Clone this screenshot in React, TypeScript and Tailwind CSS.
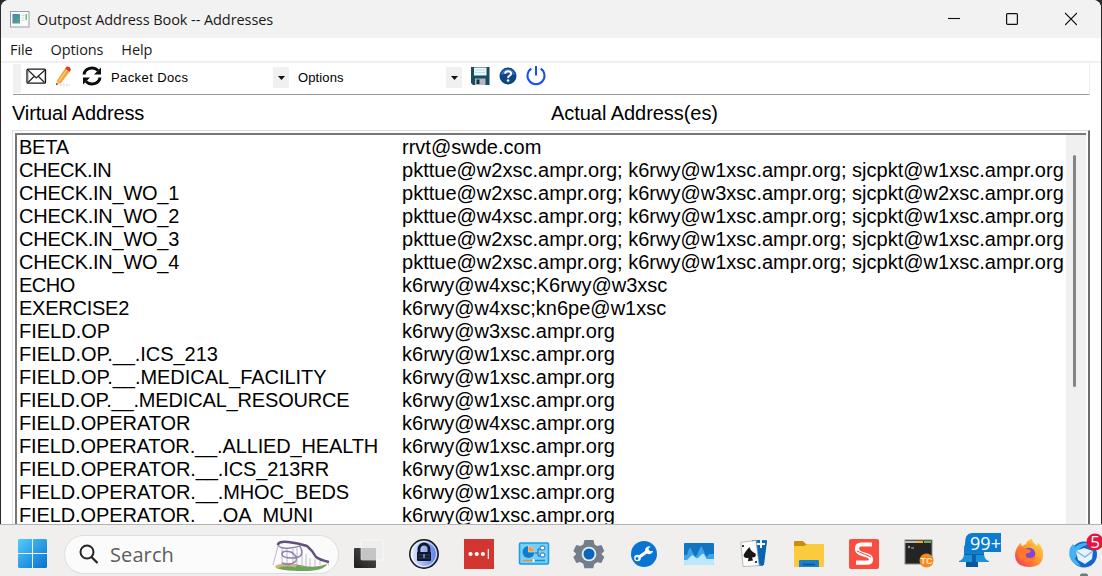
import type { ReactNode } from "react";

const rows: [string, string, string][] = [
  ["BETA", "rrvt@swde.com", "tracking-[-0.25px]"],
  ["CHECK.IN", "pkttue@w2xsc.ampr.org; k6rwy@w1xsc.ampr.org; sjcpkt@w1xsc.ampr.org", "tracking-[-0.4px]"],
  ["CHECK.IN_WO_1", "pkttue@w2xsc.ampr.org; k6rwy@w3xsc.ampr.org; sjcpkt@w2xsc.ampr.org", "tracking-[-0.25px]"],
  ["CHECK.IN_WO_2", "pkttue@w4xsc.ampr.org; k6rwy@w1xsc.ampr.org; sjcpkt@w1xsc.ampr.org", "tracking-[-0.25px]"],
  ["CHECK.IN_WO_3", "pkttue@w2xsc.ampr.org; k6rwy@w1xsc.ampr.org; sjcpkt@w1xsc.ampr.org", "tracking-[-0.25px]"],
  ["CHECK.IN_WO_4", "pkttue@w2xsc.ampr.org; k6rwy@w1xsc.ampr.org; sjcpkt@w1xsc.ampr.org", "tracking-[-0.25px]"],
  ["ECHO", "k6rwy@w4xsc;K6rwy@w3xsc", "tracking-[-0.5px]"],
  ["EXERCISE2", "k6rwy@w4xsc;kn6pe@w1xsc", "tracking-[-0.25px]"],
  ["FIELD.OP", "k6rwy@w3xsc.ampr.org", "tracking-[0px]"],
  ["FIELD.OP.__.ICS_213", "k6rwy@w1xsc.ampr.org", "tracking-[-0.05px]"],
  ["FIELD.OP.__.MEDICAL_FACILITY", "k6rwy@w1xsc.ampr.org", "tracking-[-0.04px]"],
  ["FIELD.OP.__.MEDICAL_RESOURCE", "k6rwy@w1xsc.ampr.org", "tracking-[-0.17px]"],
  ["FIELD.OPERATOR", "k6rwy@w4xsc.ampr.org", "tracking-[-0.1px]"],
  ["FIELD.OPERATOR.__.ALLIED_HEALTH", "k6rwy@w1xsc.ampr.org", "tracking-[-0.14px]"],
  ["FIELD.OPERATOR.__.ICS_213RR", "k6rwy@w1xsc.ampr.org", "tracking-[-0.1px]"],
  ["FIELD.OPERATOR.__.MHOC_BEDS", "k6rwy@w1xsc.ampr.org", "tracking-[-0.1px]"],
  ["FIELD.OPERATOR.__.OA_MUNI", "k6rwy@w1xsc.ampr.org", "tracking-[-0.12px]"],
];

function TitleBar() {
  return (
    <header className="flex h-[38px] shrink-0 items-center bg-[#f3f2f2] pl-[9px]">
      <svg width="20" height="17" viewBox="0 0 20 17" className="shrink-0">
        <defs>
          <linearGradient id="appIcon" x1="0" y1="0" x2="1" y2="1">
            <stop offset="0" stopColor="#4c7fc0" />
            <stop offset="1" stopColor="#4fae74" />
          </linearGradient>
        </defs>
        <rect x=".5" y=".5" width="18.5" height="15.5" fill="#fafafa" stroke="#9a9fa5" />
        <rect x="2.500" y="3" width="7.500" height="9.500" fill="url(#appIcon)" />
        <path d="M11.5 4.5h3M11.5 7h3M11.5 9.5h3" stroke="#d3d8dc" />
        <rect x="15.500" y="3" width="1.5" height="6" fill="#6fbe8c" />
      </svg>
      <h1 className="ml-[7px] mt-[2px] whitespace-nowrap text-[14.5px] tracking-[-0.07px] text-[#191919]">Outpost Address Book -- Addresses</h1>
      <div className="ml-auto flex items-center pr-[24px]">
        <svg width="12" height="14" viewBox="0 0 12 14"><path d="M0 6.5h12" stroke="#111" strokeWidth="1.1" /></svg>
        <svg width="12" height="14" viewBox="0 0 12 14" className="ml-[46px]">
          <rect x=".6" y="1.6" width="10.8" height="10.8" rx="1" fill="none" stroke="#111" strokeWidth="1.2" />
        </svg>
        <svg width="12" height="14" viewBox="0 0 12 14" className="ml-[47px]">
          <path d="M0 1l12 12M12 1L0 13" stroke="#111" strokeWidth="1.2" />
        </svg>
      </div>
    </header>
  );
}

function DropButton() {
  return (
    <span className="flex h-[21px] w-4 items-center justify-center bg-[#f0f0f0]">
      <svg width="7" height="4" viewBox="0 0 7 4"><path d="M0 0h7L3.5 4z" fill="#111" /></svg>
    </span>
  );
}

function Toolbar() {
  return (
    <div className="ml-3 mr-[11px] flex h-[32px] shrink-0 border-b border-r border-b-[#969696] border-r-[#eeeeee]">
      <div className="mt-px h-[29px] w-2 shrink-0 bg-[#f0f0f0]" />
      <div className="flex h-[26px] items-center">
        <svg width="21" height="17" viewBox="0 0 21 17" className="ml-[5px]">
          <rect x="1" y="1.2" width="18.5" height="14" rx="1" fill="#fff" stroke="#181818" strokeWidth="1.3" />
          <path d="M2 2l8.2 8L19 2M2 14.5l6-6M18.5 14.5l-6-6" fill="none" stroke="#222" strokeWidth="1.2" />
          <path d="M2.5 3v10M18.5 3v10" stroke="#999" strokeWidth=".5" />
        </svg>
        <svg width="18" height="20" viewBox="0 0 18 20" className="ml-[8px]">
          <path d="M2 14.5L10 2.500l4.500 3.500L6 17l-4 2z" fill="#f6a43a" />
          <path d="M4 15l8.500-12" stroke="#ffd08a" strokeWidth="1.2" />
          <path d="M10 2.500L11.500 .8q3.500-.9 4.500 2.700L14.500 6z" fill="#e33a22" />
          <path d="M2 14.500L1 19l4.500-2z" fill="#e9c392" />
          <path d="M1 19l.5-2 1.400 1.200z" fill="#222" />
          <path d="M5 19h10" stroke="#c9cfdf" strokeDasharray="2 1" />
        </svg>
        <svg width="20" height="20" viewBox="0 0 20 20" className="ml-[9px]">
          <path d="M2 8.500A8 7.200 0 0 1 16 4.500M18 11.500A8 7.200 0 0 1 4 15.500" fill="none" stroke="#0c0c0c" strokeWidth="3" />
          <path d="M19 1.500v7h-7zM1 18.500v-7h7z" fill="#0c0c0c" />
        </svg>
        <span className="ml-[9px] mt-[3px] w-[162px] whitespace-nowrap font-['Liberation_Sans'] text-[13px] tracking-[0.4px]">Packet Docs</span>
        <span className="mt-[3px]"><DropButton /></span>
        <span className="ml-[9px] mt-[3px] w-[148px] font-['Liberation_Sans'] text-[13px] tracking-[0.12px]">Options</span>
        <span className="mt-[3px]"><DropButton /></span>
        <svg width="19" height="20" viewBox="0 0 19 20" className="ml-[9px]">
          <path d="M0 1h18.500v18H2l-2-2z" fill="#174b66" />
          <rect x="3" y="1.500" width="12.500" height="8" fill="#eaf7fc" />
          <path d="M4 4h10M4 6.500h10" stroke="#bfdce8" />
          <rect x="4" y="12.500" width="10.500" height="6.500" fill="#b5b9bd" />
          <rect x="5.500" y="13.500" width="3" height="4.500" fill="#123449" />
        </svg>
        <svg width="18" height="18" viewBox="0 0 18 18" className="ml-[9px]">
          <circle cx="9" cy="9" r="8.500" fill="#0e4587" />
          <path d="M2 8a7 6 0 0 1 14 0q-7-3-14 0z" fill="#3773b2" />
          <path d="M6 6.700q.3-2.500 3.100-2.500t3 2.200q0 1.500-1.500 2.200Q9.100 9.200 9.100 11" fill="none" stroke="#fff" strokeWidth="2" />
          <circle cx="9.100" cy="13.500" r="1.300" fill="#fff" />
        </svg>
        <svg width="20" height="20" viewBox="0 0 20 20" className="ml-[9px]">
          <path d="M5.300 2.600a8.500 8.500 0 1 0 9.400 0M10 0v9.500" fill="none" stroke="#1750f0" strokeWidth="2" />
        </svg>
      </div>
    </div>
  );
}

function AddressList() {
  return (
    <section className="ml-[11px] mr-[11px] flex min-h-0 flex-1 overflow-hidden border-l border-r-2 border-t border-l-[#dddddd] border-r-[#6b6b6b] border-t-[#dddddd] pl-[2px] pr-[2px] pt-[2px]">
      <div className="flex min-w-0 flex-1 border-l-2 border-t-2 border-[#777777]">
        <div className="min-w-0 flex-1 pl-[2px] pt-px font-['Liberation_Sans'] text-[20px] leading-[23px] text-black">
          {rows.map(([name, address, tracking], i) => (
            <div key={i} className="flex h-[23px] whitespace-nowrap">
              <span className={`w-[383px] shrink-0 ${tracking}`}>{name}</span>
              <span className="tracking-[0.01px]">{address}</span>
            </div>
          ))}
        </div>
        <div className="flex w-[20px] shrink-0 bg-[#f0f0f0] pl-[7px] pt-[20px]">
          <div className="h-[232px] w-[3px] rounded-full bg-[#858585]" />
        </div>
      </div>
    </section>
  );
}

function Icon({ children }: { children?: ReactNode }) {
  return (
    <div className="flex w-[55px] shrink-0 justify-center">
      <svg width="32" height="32" viewBox="0 0 32 32" className="overflow-visible">{children}</svg>
    </div>
  );
}

function Coaster() {
  return (
    <svg width="60" height="32" viewBox="0 0 60 32">
      <path d="M3 27Q14 21 28 25T55 24Q52 31 32 31 8 31 3 27z" fill="#6da35a" />
      <path d="M4 27q10-4 20-1" stroke="#d2b66c" strokeWidth="3" fill="none" />
      <path d="M6 6L1 25M10 7v19M15 8v18M21 9v18M25 8v18M30 9v18M34 14v13M38 18v9M43 19v8M48 19v6M53 20l4 5" stroke="#c4b4ce" strokeWidth="1" />
      <path d="M6 5Q6 1 16 2t19 4q5 4 9 11 4 3 13 5" fill="none" stroke="#625077" strokeWidth="2.500" />
      <path d="M6 5q2 4 12 3t10-3M28 6q6 12-8 12-10 0-10-4t9-2q7 4 5 9-5 5-14 2" fill="none" stroke="#8d83ad" strokeWidth="1.500" />
    </svg>
  );
}

function Taskbar() {
  return (
    <footer className="flex h-[52px] shrink-0 items-center border-t border-[#b4b4b4] bg-[#f0efee] pt-[7px]">
      <svg width="30" height="30" viewBox="0 0 30 30" className="ml-[18px] shrink-0">
        <defs>
          <linearGradient id="win" x1="0" y1="0" x2="1" y2="1">
            <stop offset="0" stopColor="#50cdfb" /><stop offset="1" stopColor="#0870cf" />
          </linearGradient>
        </defs>
        <path d="M1 0h13v14H0V1zM15 0h13l1 1v13H15zM0 15h14v14H1l-1-1zM15 15h14v13l-1 1H15z" fill="url(#win)" />
      </svg>
      <div className="ml-4 flex h-[39px] w-[275px] shrink-0 items-center rounded-full border border-[#dddddd] bg-[#fbfbfb] pl-[14px] pr-[6px]">
        <svg width="20" height="20" viewBox="0 0 20 20">
          <circle cx="8" cy="8" r="6.500" fill="none" stroke="#252525" strokeWidth="2" />
          <path d="M12.500 13l6 6" stroke="#252525" strokeWidth="2.300" />
        </svg>
        <span className="ml-[11px] mt-[1px] text-[20px] tracking-[0.1px] text-[#5d5d5d]">Search</span>
        <span className="ml-auto mt-[3px]"><Coaster /></span>
      </div>
      <div className="ml-[2px] flex w-[761px] overflow-visible">
        <Icon>
          <defs><linearGradient id="dark" x1="0" x2="1" y1="1" y2="0"><stop stopColor="#1d1d1d" /><stop offset="1" stopColor="#555" /></linearGradient></defs>
          <rect x="1" y="10" width="22" height="20" rx="1" fill="url(#dark)" />
          <rect x="8" y="2" width="22" height="20" rx="1" fill="#eee" fillOpacity=".8" stroke="#fff" strokeOpacity=".6" />
          <rect x="8.500" y="10" width="14.500" height="12" fill="#c5c5c5" />
        </Icon>
        <Icon>
          <defs><linearGradient id="lock"><stop stopColor="#edf2ff" /><stop offset="1" stopColor="#5279e2" /></linearGradient></defs>
          <circle cx="16" cy="16" r="14.200" fill="url(#lock)" stroke="#171717" strokeWidth="1.500" />
          <circle cx="16" cy="16" r="12.500" fill="none" stroke="#fff" strokeWidth=".8" />
          <path d="M11 15v-4a5 5 0 0 1 10 0v4" fill="none" stroke="#10162c" strokeWidth="2.800" />
          <rect x="9" y="14" width="14" height="9" rx="1" fill="#10162c" />
          <path d="M10 17h12M10 20h12" stroke="#3e4d78" strokeWidth=".8" />
          <path d="M16 16v4" stroke="#b7c8ff" />
        </Icon>
        <Icon>
          <rect x="1" y="1" width="30" height="30" fill="#d33530" />
          <circle cx="7.500" cy="16" r="2.100" fill="#fff" /><circle cx="13.700" cy="16" r="2.100" fill="#fff" /><circle cx="19.900" cy="16" r="2.100" fill="#fff" />
          <path d="M25.300 11v10" stroke="#fff" strokeWidth="1.100" />
        </Icon>
        <Icon>
          <rect x="1.500" y="5" width="29" height="21" rx="1" fill="#77cef7" stroke="#1a9cde" strokeWidth="1.500" />
          <circle cx="10.500" cy="14" r="6" fill="#0c7ed2" />
          <path d="M10.500 14V8a6 6 0 0 1 6 6z" fill="#ff9b2b" stroke="#d9f4ff" strokeWidth=".6" />
          <path d="M17 15h3v-4h3M20 15v3h3" stroke="#176fbb" fill="none" />
          <rect x="22" y="8" width="5" height="4" rx="2" fill="#fff" stroke="#176fbb" /><rect x="22" y="15" width="5" height="4" rx="2" fill="#fff" stroke="#176fbb" />
          <path d="M5 22.500h10" stroke="#f28d26" strokeWidth="1.500" /><path d="M17 22.500h10" stroke="#138dcc" strokeWidth="1.500" /><path d="M15.500 21v3" stroke="#fff" strokeWidth="1.500" />
        </Icon>
        <Icon>
          <path d="M11.500 2h9l1 4.500 3 1.500 4-1 2.800 6-3 3 3 3-3 6-4-.8-3 1.800-1 4.300h-9l-1-4.500-3-1.700-4 .8-3-6 3-3-3-3 3-6 4 1 3-1.500z" fill="#747e8a" />
          <circle cx="16" cy="16" r="7.300" fill="#e6ecf1" />
          <circle cx="16" cy="16" r="5.500" fill="#0866bc" />
        </Icon>
        <Icon>
          <circle cx="16" cy="16" r="13" fill="#0875d3" />
          <path d="M10 20L21 12" stroke="#fff" strokeWidth="3.400" />
          <circle cx="9.500" cy="20" r="3.300" fill="#fff" /><circle cx="9" cy="20.500" r="1.500" fill="#0875d3" />
          <path d="M22.500 8.500a4 4 0 1 0 2.500 4.500l-3.500.2-1.500-2z" fill="#fff" />
        </Icon>
        <Icon>
          <rect x="1" y="5" width="30" height="22" rx="1" fill="#1275c2" />
          <path d="M1 17h3l1.500-5q1.500-4 3 0l3 6q1.500 2 2.500-1l3-7q1.500-3 2.500 0l3 7q1 3 2.500 0l1-1h5v10q0 1-1 1H2q-1 0-1-1z" fill="#3ea3e8" />
          <path d="M1 22h3l4-4q1.500-1.500 3 0l2 2q1.500 1 3-1l3-3q1.500-1 2.500 1l2 4h7.500v5q0 1-1 1H2q-1 0-1-1z" fill="#bce7fc" />
        </Icon>
        <Icon>
          <path d="M14 2h15l-4 26H15z" fill="#168acd" />
          <path d="M20 2l9 1-3 24-8-1z" fill="#0965b3" />
          <path d="M2 5l15-3 5 25-16 2z" fill="#fcfcfa" stroke="#999" strokeWidth=".6" transform="rotate(4 12 16)" />
          <path d="M11.500 9q1 4 6 6.500 1.500 4-3.500 4l1 3-5 .8.500-3.500q-4 1-5-2 .5-3 6-8.800z" fill="#171717" />
          <path d="M23 2v8M19 6h8" stroke="#fff" strokeWidth="1.900" />
          <circle cx="5" cy="8" r="1" /><circle cx="18" cy="24" r="1" />
        </Icon>
        <Icon>
          <path d="M1 4q0-1 1-1h8l3 3h17q1 0 1 1v10H1z" fill="#cf8b0d" />
          <path d="M1 8h10l3-2h16q1 0 1 1v21q0 1-1 1H2q-1 0-1-1z" fill="#f9cb3d" />
          <path d="M6 29v-6q0-1 1-1h18q1 0 1 1v6z" fill="#1680cb" /><path d="M10 26.500h12" stroke="#0c5497" strokeWidth="1.500" />
        </Icon>
        <Icon>
          <rect x="1" y="1" width="30" height="30" rx="2" fill="#f94d3f" />
          <path d="M24 6.500H13q-4 0-4 4 0 3.500 4 5l7 2.200q3 1.200 3 4 0 3-4 3H8" fill="none" stroke="#fff" strokeWidth="4.200" />
          <path d="M9 13l14 6" stroke="#f94d3f" strokeWidth="1" />
        </Icon>
        <Icon>
          <rect x="2" y="2" width="27" height="24" fill="#242424" stroke="#8c8c8c" />
          <path d="M2 3h11v2H2z" fill="#bcbcbc" /><path d="M13 3h7v2h-7z" fill="#f2ac30" /><path d="M21 3h7v2h-7z" fill="#6cb33a" />
          <path d="M5 8l2 1-2 1M8 10h3" stroke="#ddd" fill="none" strokeWidth=".8" />
          <circle cx="23.500" cy="22.500" r="7" fill="#f18b20" />
          <text x="23.500" y="26" textAnchor="middle" fontSize="9" fontWeight="700" fill="#ffe8bd" fontFamily="Liberation Sans">TC</text>
        </Icon>
        <Icon>
          <path d="M6 24V11q0-8 9-8h11v21z" fill="#137fc8" />
          <path d="M6 16h20v8H6z" fill="#0763ad" /><path d="M1 23q4-1 5-6h8v7H1zM18 17h8q1 5 5 6v1H18z" fill="#1d91d7" />
          <rect x="8" y="24" width="12" height="5" fill="#0a559b" />
          <path d="M14-5h29v19H15Q7 14 7 6 7-5 14-5z" fill="#0c7cd1" />
          <text x="12" y="11.500" fontSize="18" fill="#fff" fontFamily="Open Sans" textLength="31">99+</text>
        </Icon>
        <Icon>
          <defs><linearGradient id="fox" x1="1" y1="0" x2="0" y2="1"><stop stopColor="#ffe34c" /><stop offset=".5" stopColor="#ff9329" /><stop offset="1" stopColor="#f12966" /></linearGradient></defs>
          <path d="M6 7q1-2 2-2 0 2 1 3l4-2q1-4 6-5 0 3 3 5l2 2 1-3q6 5 5 13-1 11-14 11T2 18Q2 11 6 7z" fill="url(#fox)" />
          <circle cx="16" cy="16" r="6.200" fill="#7b48d4" />
          <path d="M5 10q5-2 8 1 4 0 5 2-1 2.500-5 2.500-1 4.500 4 4.500 4 0 5.500-4 1 8-8 8.500Q3 23 5 10z" fill="#ff762f" />
        </Icon>
        <Icon>
          <circle cx="16" cy="16.500" r="13" fill="#1266cf" />
          <path d="M2 10l3-4 2 3q7-6 16-3-9 1-12 6l-4 9 6 7q-7-1-10-6-3-5-1-12z" fill="#45b1f0" />
          <path d="M8 13l8-3 9 3-1 8-7 5-7-4z" fill="#e7f4ff" /><path d="M8 13l9 6 8-6" fill="none" stroke="#83b9e8" strokeWidth="1.500" />
          <circle cx="27" cy="4" r="8.500" fill="#e8133f" />
          <text x="27" y="10" textAnchor="middle" fontSize="17" fill="#fff" fontFamily="Open Sans">5</text>
          <rect x="12" y="35.500" width="8" height="4" rx="2" fill="#777" />
        </Icon>
      </div>
    </footer>
  );
}

export default function App() {
  return (
    <div className="flex h-[576px] w-[1102px] flex-col overflow-hidden bg-[#2b292c] font-['Open_Sans',sans-serif]">
      <main className="ml-px mr-px flex min-h-0 flex-1 flex-col overflow-hidden rounded-t-[8px] bg-white">
        <TitleBar />
        <nav className="flex h-[25px] shrink-0 items-center gap-[18px] border-b-2 border-[#f0f0f0] pl-[9px] pt-px text-[14.5px] tracking-[-0.1px] text-[#191919]">
          <span>File</span><span>Options</span><span>Help</span>
        </nav>
        <Toolbar />
        <div className="flex h-[35px] shrink-0 items-center pl-[11px] pt-px font-['Liberation_Sans'] text-[20px]">
          <span className="w-[539px] tracking-[-0.13px]">Virtual Address</span><span className="tracking-[-0.05px]">Actual Address(es)</span>
        </div>
        <AddressList />
      </main>
      <Taskbar />
    </div>
  );
}
